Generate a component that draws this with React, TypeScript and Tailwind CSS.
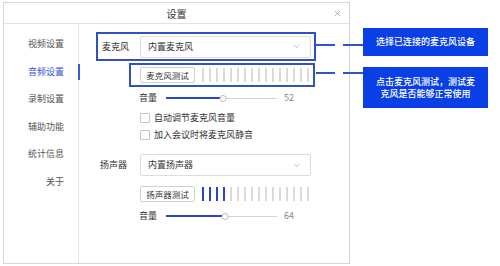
import type { FC } from "react";
import { ChevronDown, X } from "lucide-react";

const font = { fontFamily: '"Noto Sans CJK SC", "Noto Sans", sans-serif' };

const menu = ["视频设置", "音频设置", "录制设置", "辅助功能", "统计信息", "关于"];

const Bars: FC<{ active: number }> = ({ active }) => (
  <div className="ml-[7px] flex gap-[5px]">
    {Array.from({ length: 16 }).map((_, i) => (
      <span
        key={i}
        className={
          i < active
            ? "h-[14px] w-[2px] bg-[#2846c8]"
            : "h-[14px] w-[2px] bg-[#dadada]"
        }
      />
    ))}
  </div>
);

const Select: FC<{ value: string }> = ({ value }) => (
  <div className="flex h-[22px] w-[171px] items-center justify-between rounded-[2px] border border-[#dcdcdc] pr-[9px] pl-[7px] text-[9px] text-[#333]">
    <span>{value}</span>
    <ChevronDown size={9} strokeWidth={1.5} className="text-[#888]" />
  </div>
);

const Volume: FC<{ pct: number; value: number }> = ({ pct, value }) => (
  <div className="ml-[43px] flex h-[14px] items-center text-[9px]">
    <span className="w-[27px] text-[#333]">音量</span>
    <div className="relative h-[14px] w-[111px]">
      <div className="absolute top-[7px] right-0 left-0 h-px bg-[#d4d4d4]" />
      <div
        className="absolute top-[6px] left-0 h-[2px] bg-[#2846c8]"
        style={{ width: `${pct}%` }}
      />
      <div
        className="absolute top-[4px] h-[7px] w-[7px] -translate-x-1/2 rounded-full border border-[#bdbdbd] bg-white"
        style={{ left: `${pct + 2}%` }}
      />
    </div>
    <span className="ml-[7px] text-[#888]">{value}</span>
  </div>
);

const Check: FC<{ label: string }> = ({ label }) => (
  <div className="ml-[44px] flex h-[14px] items-center text-[9px] text-[#333]">
    <span className="h-[10px] w-[10px] rounded-[1px] border border-[#c4c4c4] bg-white" />
    <span className="ml-[4px]">{label}</span>
  </div>
);

const TestButton: FC<{ label: string }> = ({ label }) => (
  <div className="flex h-[16px] w-[55px] items-center justify-center rounded-[2px] border border-[#cfcfcf] bg-white text-[8.5px] text-[#333]">
    {label}
  </div>
);

export default function App() {
  return (
    <div className="relative h-[266px] w-[500px] overflow-hidden bg-white" style={font}>
      <div className="mt-[2px] ml-[3px] flex h-[262px] w-[347px] flex-col border border-[#d6d6d6]">
        <div className="relative flex h-[21px] shrink-0 items-center justify-center border-b border-[#e2e2e2] text-[10px] text-[#333]">
          设置
          <X size={9} strokeWidth={1.5} className="absolute top-[6px] right-[7px] text-[#777]" />
        </div>

        <div className="flex flex-1">
          <div className="w-[75px] shrink-0 border-r border-[#e6e6e6] pt-[6px]">
            {menu.map((m, i) => (
              <div
                key={m}
                className={
                  i === 1
                    ? "relative flex h-[27.5px] items-center justify-end pr-[14px] text-[9px] text-[#2f54d4]"
                    : "flex h-[27.5px] items-center justify-end pr-[14px] text-[9px] text-[#555]"
                }
              >
                {m}
                {i === 1 && (
                  <span className="absolute top-[6px] right-[-2px] h-[16px] w-[2px] bg-[#3d5bd6]" />
                )}
              </div>
            ))}
          </div>

          <div className="flex flex-1 flex-col pt-[8px] pl-[17px]">
            <div className="flex h-[29px] w-[220px] items-center border-2 border-[#3150c2] pl-[4px]">
              <span className="w-[38px] text-[9px] text-[#333]">麦克风</span>
              <Select value="内置麦克风" />
            </div>

            <div className="mt-[2px] ml-[33px] flex h-[24px] w-[186px] items-center border-2 border-[#3150c2] pl-[9px]">
              <TestButton label="麦克风测试" />
              <Bars active={0} />
            </div>

            <div className="mt-[4px]">
              <Volume pct={49} value={52} />
            </div>

            <div className="mt-[6px]">
              <Check label="自动调节麦克风音量" />
            </div>
            <div className="mt-[3px]">
              <Check label="加入会议时将麦克风静音" />
            </div>

            <div className="mt-[12px] ml-[4px] flex h-[22px] items-center">
              <span className="w-[40px] text-[9px] text-[#333]">扬声器</span>
              <Select value="内置扬声器" />
            </div>

            <div className="mt-[10px] ml-[44px] flex h-[16px] items-center">
              <TestButton label="扬声器测试" />
              <Bars active={4} />
            </div>

            <div className="mt-[7px]">
              <Volume pct={51} value={64} />
            </div>
          </div>
        </div>
      </div>

      {/* annotations */}
      <span className="absolute top-[44px] left-[316px] h-[2px] w-[19px] bg-[#2d55c8]" />
      <span className="absolute top-[44px] left-[343px] h-[2px] w-[20px] bg-[#2d55c8]" />
      <span className="absolute top-[72px] left-[316px] h-[2px] w-[19px] bg-[#2d55c8]" />
      <span className="absolute top-[72px] left-[343px] h-[2px] w-[20px] bg-[#2d55c8]" />

      <div className="absolute top-[28px] left-[363px] flex h-[28px] w-[125px] items-center justify-center bg-[#0a3fe6] text-[9px] font-medium text-white">
        选择已连接的麦克风设备
      </div>
      <div className="absolute top-[67px] left-[363px] flex h-[41px] w-[125px] flex-col items-center justify-center bg-[#0a3fe6] text-[9px] leading-[12px] font-medium text-white">
        <span>点击麦克风测试，测试麦</span>
        <span>克风是否能够正常使用</span>
      </div>
    </div>
  );
}
